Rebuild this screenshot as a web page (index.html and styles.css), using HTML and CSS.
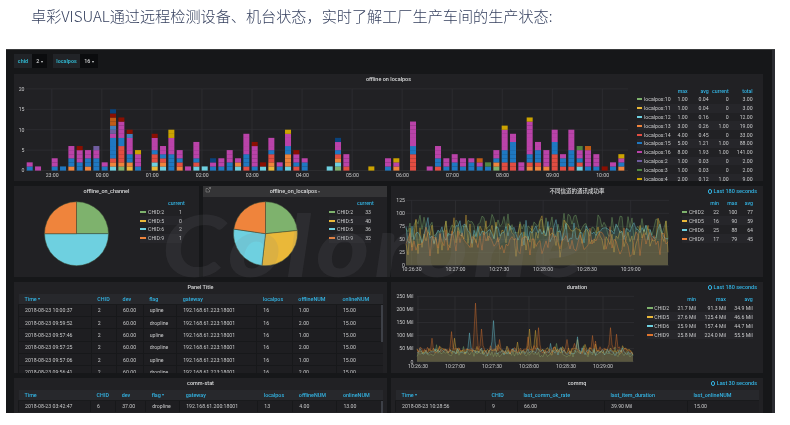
FILE: index.html
```html
<!DOCTYPE html>
<html lang="zh">
<head>
<meta charset="utf-8">
<title>卓彩VISUAL</title>
<link rel="stylesheet" href="styles.css">
</head>
<body>
<h1 class="headline">卓彩VISUAL通过远程检测设备、机台状态，实时了解工厂生产车间的生产状态:</h1>
<div class="dash">
  <div class="dash-main">
    <div class="vars">
      <span class="var-label">chid</span><span class="var-value">2 <i class="caret"></i></span>
      <span class="var-label var-second">localpos</span><span class="var-value var-wide">16 <i class="caret"></i></span>
    </div>

    <section class="panel panel-top">
      <h2 class="panel-title">offline on localpos</h2>
      <div class="top-body">
        <svg class="chart" id="bars" width="622" height="96"></svg>
        <table class="legend legend-top">
          <tr class="lh"><th></th><th></th><th>max</th><th>avg</th><th>current</th><th>total</th></tr>
          <tr><td><b class="sw c-green"></b></td><td>localpos:10</td><td>1.00</td><td>0.04</td><td>0</td><td>3.00</td></tr>
          <tr><td><b class="sw c-yellow"></b></td><td>localpos:11</td><td>1.00</td><td>0.04</td><td>0</td><td>3.00</td></tr>
          <tr><td><b class="sw c-cyan"></b></td><td>localpos:12</td><td>1.00</td><td>0.16</td><td>0</td><td>12.00</td></tr>
          <tr><td><b class="sw c-orange"></b></td><td>localpos:13</td><td>3.00</td><td>0.26</td><td>1.00</td><td>19.00</td></tr>
          <tr><td><b class="sw c-red"></b></td><td>localpos:14</td><td>4.00</td><td>0.45</td><td>0</td><td>33.00</td></tr>
          <tr><td><b class="sw c-blue"></b></td><td>localpos:15</td><td>5.00</td><td>1.21</td><td>1.00</td><td>88.00</td></tr>
          <tr><td><b class="sw c-magenta"></b></td><td>localpos:16</td><td>8.00</td><td>1.93</td><td>1.00</td><td>141.00</td></tr>
          <tr><td><b class="sw c-purple"></b></td><td>localpos:2</td><td>1.00</td><td>0.03</td><td>0</td><td>2.00</td></tr>
          <tr><td><b class="sw c-dkgreen"></b></td><td>localpos:3</td><td>1.00</td><td>0.03</td><td>0</td><td>2.00</td></tr>
          <tr><td><b class="sw c-dkyellow"></b></td><td>localpos:4</td><td>2.00</td><td>0.12</td><td>1.00</td><td>9.00</td></tr>
        </table>
      </div>
    </section>

    <div class="row row-mid">
      <section class="panel panel-pie">
        <h2 class="panel-title">offline_on_channel</h2>
        <div class="pie-body">
          <svg class="chart pie" data-values="1,0,2,1" width="70" height="70"></svg>
          <table class="legend legend-pie">
            <tr class="lh"><th></th><th></th><th>current</th></tr>
            <tr><td><b class="sw sw-big c-green"></b></td><td>CHID:2</td><td>1</td></tr>
            <tr><td><b class="sw sw-big c-yellow"></b></td><td>CHID:5</td><td>0</td></tr>
            <tr><td><b class="sw sw-big c-cyan"></b></td><td>CHID:6</td><td>2</td></tr>
            <tr><td><b class="sw sw-big c-orange"></b></td><td>CHID:9</td><td>1</td></tr>
          </table>
        </div>
      </section>
      <section class="panel panel-pie">
        <h2 class="panel-title panel-title-hover"><svg class="share" width="6" height="6" viewBox="0 0 6 6"><path d="M1 1.5h2M1 1.5v3.500h3.500v-2M3 3L5.500.5M3.800.5h1.700v1.700" fill="none" stroke="#8e8e8e" stroke-width=".6"/></svg>offline_on_localpos <i class="caret caret-dim"></i></h2>
        <div class="pie-body">
          <svg class="chart pie" data-values="33,40,36,32" width="70" height="70"></svg>
          <table class="legend legend-pie">
            <tr class="lh"><th></th><th></th><th>current</th></tr>
            <tr><td><b class="sw sw-big c-green"></b></td><td>CHID:2</td><td>33</td></tr>
            <tr><td><b class="sw sw-big c-yellow"></b></td><td>CHID:5</td><td>40</td></tr>
            <tr><td><b class="sw sw-big c-cyan"></b></td><td>CHID:6</td><td>36</td></tr>
            <tr><td><b class="sw sw-big c-orange"></b></td><td>CHID:9</td><td>32</td></tr>
          </table>
        </div>
      </section>
      <section class="panel panel-line">
        <h2 class="panel-title">不同信道的通讯成功率<span class="timeinfo"><i class="clock"></i>Last 180 seconds</span></h2>
        <div class="line-body">
          <svg class="chart" id="rate" width="283" height="80"></svg>
          <table class="legend legend-line">
            <tr class="lh"><th></th><th></th><th>min</th><th>max</th><th>avg</th></tr>
            <tr><td><b class="sw sw-big c-green"></b></td><td>CHID2</td><td>22</td><td>100</td><td>77</td></tr>
            <tr><td><b class="sw sw-big c-yellow"></b></td><td>CHID5</td><td>16</td><td>90</td><td>59</td></tr>
            <tr><td><b class="sw sw-big c-cyan"></b></td><td>CHID6</td><td>25</td><td>88</td><td>64</td></tr>
            <tr><td><b class="sw sw-big c-orange"></b></td><td>CHID9</td><td>17</td><td>79</td><td>45</td></tr>
          </table>
        </div>
      </section>
    </div>

    <div class="row row-low">
      <section class="panel panel-table">
        <h2 class="panel-title">Panel Title</h2>
        <div class="table-wrap">
          <table class="data data-a">
            <colgroup><col class="a1"><col class="a2"><col class="a3"><col class="a4"><col class="a5"><col class="a6"><col class="a7"><col class="a8"></colgroup>
            <tr><th>Time <i class="caret caret-blue"></i></th><th>CHID</th><th>dev</th><th>flag</th><th>gateway</th><th>localpos</th><th>offlineNUM</th><th>onlineNUM</th></tr>
            <tr><td>2018-08-23 10:00:37</td><td>2</td><td>60.00</td><td>upline</td><td>192.168.61.223:18001</td><td>16</td><td>1.00</td><td>15.00</td></tr>
            <tr><td>2018-08-23 09:59:52</td><td>2</td><td>60.00</td><td>dropline</td><td>192.168.61.223:18001</td><td>16</td><td>2.00</td><td>15.00</td></tr>
            <tr><td>2018-08-23 09:57:46</td><td>2</td><td>60.00</td><td>upline</td><td>192.168.61.223:18001</td><td>16</td><td>1.00</td><td>15.00</td></tr>
            <tr><td>2018-08-23 09:57:25</td><td>2</td><td>60.00</td><td>dropline</td><td>192.168.61.223:18001</td><td>16</td><td>2.00</td><td>15.00</td></tr>
            <tr><td>2018-08-23 09:57:06</td><td>2</td><td>60.00</td><td>upline</td><td>192.168.61.223:18001</td><td>16</td><td>1.00</td><td>15.00</td></tr>
            <tr><td>2018-08-23 09:56:41</td><td>2</td><td>60.00</td><td>dropline</td><td>192.168.61.223:18001</td><td>16</td><td>2.00</td><td>15.00</td></tr>
          </table>
          <i class="scroll-thumb"></i>
        </div>
      </section>
      <section class="panel panel-line">
        <h2 class="panel-title">duration<span class="timeinfo"><i class="clock"></i>Last 180 seconds</span></h2>
        <div class="line-body">
          <svg class="chart" id="duration" width="252" height="80"></svg>
          <table class="legend legend-dur">
            <tr class="lh"><th></th><th></th><th>min</th><th>max</th><th>avg</th></tr>
            <tr><td><b class="sw sw-big c-green"></b></td><td>CHID2</td><td>21.7 Mil</td><td>91.3 Mil</td><td>34.9 Mil</td></tr>
            <tr><td><b class="sw sw-big c-yellow"></b></td><td>CHID5</td><td>27.6 Mil</td><td>125.4 Mil</td><td>46.6 Mil</td></tr>
            <tr><td><b class="sw sw-big c-cyan"></b></td><td>CHID6</td><td>25.9 Mil</td><td>157.4 Mil</td><td>44.7 Mil</td></tr>
            <tr><td><b class="sw sw-big c-dkorange"></b></td><td>CHID9</td><td>25.8 Mil</td><td>224.0 Mil</td><td>55.5 Mil</td></tr>
          </table>
        </div>
      </section>
    </div>

    <div class="row row-last">
      <section class="panel panel-table">
        <h2 class="panel-title">comm-stat</h2>
        <div class="table-wrap">
          <table class="data data-b">
            <colgroup><col class="b1"><col class="b2"><col class="b3"><col class="b4"><col class="b5"><col class="b6"><col class="b7"><col class="b8"></colgroup>
            <tr><th>Time</th><th>CHID</th><th>dev</th><th>flag <i class="caret caret-blue"></i></th><th>gateway</th><th>localpos</th><th>offlineNUM</th><th>onlineNUM</th></tr>
            <tr><td>2018-08-23 03:42:47</td><td>6</td><td>37.00</td><td>dropline</td><td>192.168.61.200:18001</td><td>13</td><td>4.00</td><td>13.00</td></tr>
          </table>
          <i class="scroll-thumb"></i>
        </div>
      </section>
      <section class="panel panel-line">
        <h2 class="panel-title">commq<span class="timeinfo"><i class="clock"></i>Last 30 seconds</span></h2>
        <div class="table-wrap table-wrap-c">
          <table class="data data-c">
            <colgroup><col class="c1"><col class="c2"><col class="c3"><col class="c4"><col class="c5"></colgroup>
            <tr><th>Time <i class="caret caret-blue"></i></th><th>CHID</th><th>last_comm_ok_rate</th><th>last_item_duration</th><th>last_onlineNUM</th></tr>
            <tr><td>2018-08-23 10:28:56</td><td>9</td><td>66.00</td><td>39.90 Mil</td><td>15.00</td></tr>
          </table>
        </div>
      </section>
    </div>
  </div>
  <div class="dash-scroll"></div>
  <span class="watermark">Colorone</span>
</div>
<script src="charts.js"></script>
</body>
</html>
```
FILE: styles.css
```css
* { box-sizing: border-box; }
html, body { margin: 0; padding: 0; background: #fff; overflow: hidden; }
body { width: 790px; height: 425px; font-family: Roboto, "Noto Sans CJK SC", sans-serif; }

.headline {
  margin: 0;
  height: 49px;
  padding: 3px 0 0 31px;
  font: 300 15.15px/24px "Noto Sans CJK SC", sans-serif;
  color: #36415f;
  white-space: nowrap;
  filter: blur(.25px);
}

.dash {
  position: relative;
  display: flex;
  width: 769px;
  height: 364px;
  margin-left: 6px;
  background: #161719;
  border-top: 1px solid #3a3b3d;
  overflow: hidden;
  filter: blur(.35px);
}
.dash-main { flex: 1; padding-left: 8px; min-width: 0; }
.dash-scroll { width: 3px; background: #2b2c31; }

.vars { display: flex; height: 24px; padding-top: 4px; font-size: 5.4px; line-height: 14px; align-items: flex-start; }
.var-label { height: 14px; width: 18px; background: #212327; color: #2fb0c8; font-weight: 700; text-align: center; }
.var-second { width: 27px; margin-left: 6px; }
.var-value { height: 14px; width: 15px; background: #0b0c0e; color: #d8d9da; text-align: center; font-weight: 500; }
.var-wide { width: 18px; }
.caret { display: inline-block; width: 0; height: 0; border: 1.5px solid transparent; border-top: 2px solid #d8d9da; border-bottom: 0; vertical-align: middle; }
.caret-blue { border-top-color: #33b5e5; }
.caret-dim { border-top-color: #8e8e8e; }

.panel { background: #212124; overflow: hidden; position: relative; }
.panel-title {
  position: relative;
  margin: 0;
  height: 11px;
  font-size: 5.5px;
  line-height: 11px;
  font-weight: 500;
  color: #d8d9da;
  text-align: center;
  white-space: nowrap;
}
.panel-title-hover { background: #343436; }
.share { position: absolute; left: 2px; top: 1px; }
.timeinfo { position: absolute; right: 6px; top: 0; color: #33b5e5; font-weight: 500; }
.clock { display: inline-block; width: 4.5px; height: 4.5px; margin-right: 1.5px; border: .7px solid #33b5e5; border-radius: 50%; vertical-align: -.5px; }

.panel-top { width: 749px; height: 107px; }
.top-body { display: flex; }
.chart { display: block; flex: none; }
.chart text { font-family: Roboto, sans-serif; font-size: 5.2px; fill: #c8c9ca; }

.row { display: flex; gap: 4px; margin-top: 5px; }
.row-mid { height: 91px; }
.row-low { height: 91px; }
.row-last { height: 40px; }
.panel-pie { width: 185px; }
.panel-pie + .panel-pie { width: 184px; }
.panel-line { width: 372px; }
.panel-table { width: 373px; }

.pie-body { display: flex; padding: 0 0 0 27px; }
.line-body { display: flex; }

.legend { border-collapse: collapse; font-size: 5.2px; color: #c8c9ca; flex: none; align-self: flex-start; }
.legend th { color: #33b5e5; font-weight: 500; text-align: right; padding: 0; }
.legend td { padding: 0; text-align: right; white-space: nowrap; }
.legend td:nth-child(2) { text-align: left; }
.legend tr { height: 8.8px; }
.legend tr:nth-child(odd):not(.lh) td { background: #26262a; }
.sw { display: block; width: 5px; height: 2px; }
.sw-big { width: 5.5px; height: 2px; }
.c-green { background: #7eb26d; }
.c-yellow { background: #eab839; }
.c-cyan { background: #6ed0e0; }
.c-orange { background: #ef843c; }
.c-dkorange { background: #e0752d; }
.c-red { background: #e24d42; }
.c-blue { background: #1f78c1; }
.c-magenta { background: #ba43a9; }
.c-purple { background: #705da0; }
.c-dkgreen { background: #508642; }
.c-dkyellow { background: #cca300; }

.legend-top { margin: 2px 0 0 .7px; width: 116px; table-layout: fixed; }
.legend-top tr:first-child { height: 8px; }
.legend-top th:nth-child(1) { width: 7.3px; }
.legend-top th:nth-child(2) { width: 27px; }
.legend-top th:nth-child(3) { width: 16.7px; }
.legend-top th:nth-child(4) { width: 21px; }
.legend-top th:nth-child(5) { width: 20px; }
.legend-top th:nth-child(6) { width: 24px; }

.legend-pie { margin: 1.3px 0 0 29px; width: 42px; table-layout: fixed; }
.legend-pie tr { height: 8.9px; }
.legend-pie th:nth-child(1) { width: 8px; }
.legend-pie th:nth-child(2) { width: 20px; }
.legend-pie th:nth-child(3) { width: 14px; }

.legend-line { margin: 1.5px 0 0 7.7px; width: 71.3px; table-layout: fixed; }
.legend-line tr { height: 8.9px; }
.legend-line th:nth-child(1) { width: 7.3px; }
.legend-line th:nth-child(2) { width: 18px; }
.legend-line th:nth-child(3) { width: 12px; }
.legend-line th:nth-child(4) { width: 18.300px; }
.legend-line th:nth-child(5) { width: 15.700px; }

.legend-dur { margin: 1.5px 0 0 4.3px; width: 105.4px; table-layout: fixed; }
.legend-dur tr { height: 8.9px; }
.legend-dur th:nth-child(1) { width: 7px; }
.legend-dur th:nth-child(2) { width: 17px; }
.legend-dur th:nth-child(3) { width: 24.700px; }
.legend-dur th:nth-child(4) { width: 30px; }
.legend-dur th:nth-child(5) { width: 26.700px; }

.table-wrap { position: relative; margin: 0 4px; height: 80px; padding-top: 1px; overflow: hidden; }
.data { border-collapse: collapse; table-layout: fixed; width: 100%; font-size: 5.2px; color: #c8c9ca; }
.data th { height: 10px; background: #27282c; color: #33b5e5; font-weight: 500; text-align: left; padding: 0 0 0 6px; font-size: 5.4px; border-bottom: 1px solid #191a1c; }
.data td { height: 12.4px; padding: 0 0 0 6px; border-top: .5px solid #17181a; border-left: .5px solid #17181a; white-space: nowrap; background: #1e1e21; }
.scroll-thumb { position: absolute; right: 0; top: 12px; width: 2px; height: 37px; background: #3d4047; }

col.a1 { width: 72.7px; } col.a2 { width: 25.3px; } col.a3 { width: 26.5px; } col.a4 { width: 33.5px; }
col.a5 { width: 80px; } col.a6 { width: 35.5px; } col.a7 { width: 44px; } col.a8 { width: 46.5px; }
col.b1 { width: 72px; } col.b2 { width: 25px; } col.b3 { width: 30px; } col.b4 { width: 34px; }
col.b5 { width: 78px; } col.b6 { width: 35px; } col.b7 { width: 44px; } col.b8 { width: 46px; }
col.c1 { width: 90px; } col.c2 { width: 32px; } col.c3 { width: 87px; } col.c4 { width: 83px; } col.c5 { width: 73px; }

.watermark {
  position: absolute;
  left: 156px;
  top: 144px;
  font: italic 900 85px/100px Lato, sans-serif;
  letter-spacing: 4px;
  color: rgba(125, 125, 130, .13);
  white-space: nowrap;
  pointer-events: none;
  transform: scaleX(1.2);
  transform-origin: left top;
}
```
FILE: charts.js
```js
var NS = 'http://www.w3.org/2000/svg';
var COL = { m: '#ba43a9', b: '#1f78c1', r: '#e24d42', o: '#ef843c', c: '#6ed0e0', y: '#eab839', g: '#7eb26d',
  D: '#890f02', Y: '#cca300', B: '#0a437c', p: '#705da0', l: '#447ebc', O: '#c15c17', G: '#508642' };

function el(parent, tag, attrs, text) {
  var e = document.createElementNS(NS, tag);
  for (var k in attrs) e.setAttribute(k, attrs[k]);
  if (text !== undefined) e.textContent = text;
  parent.appendChild(e);
  return e;
}

/* Each bar: colour letters, bottom to top, one letter per unit */
var BARS = ['bm','m','','bmm','b','obbmmm','bbmmmD','obbmm','bbbmmp','bm',
  'corbbbbbmplOODB','gorrrrbbmmmmD','yobbmmmmlD','bmmmY','','ycrrbmmmD','corbmm','bbbbmmmmYY','orbmm','m',
  'crbmmmm','c','bmB','bmm','bbmmm','com','rbbbmmmmm','bmmmmmD','cD','yorrbmmm',
  'bm','cooobbmmmY','rbmmD','bbm','','','c','gcorbmmB','rmmm','',
  '','Y','','bmm','omY','','rrrrbbmmmmmm','','m','rbbmmm',
  'bmm','bbmm','bmm','bbm','bmO','bG','gobmm','rrbbbmmmmmY','rrbbbbbmm','mm',
  'orbbmmmmmmmmY','orbbbmm','ommmm','rrrrbbbmmm','rbbm','rbbbbmmmmm','crbmmG','bmmmmO','bmmm','D',
  'bm','obmY'];

function drawBars() {
  var s = document.getElementById('bars');
  var base = 85.5, unit = 4.08, x0 = 12.7, pitch = 8.333;
  [0, 5, 10, 15, 20].forEach(function (v) {
    var y = base - v * unit;
    el(s, 'line', { x1: 12, x2: 614, y1: y, y2: y, stroke: '#313135', 'stroke-width': .7 });
    el(s, 'text', { x: 10.5, y: y + 1.8, 'text-anchor': 'end' }, v);
  });
  ['23:00','00:00','01:00','02:00','03:00','04:00','05:00','06:00','07:00','08:00','09:00','10:00'].forEach(function (t, i) {
    var x = 37.8 + i * 50.05;
    el(s, 'line', { x1: x, x2: x, y1: base - 20 * unit, y2: base, stroke: '#313135', 'stroke-width': .7 });
    el(s, 'text', { x: x + .3, y: base + 6, 'text-anchor': 'middle' }, t);
  });
  BARS.forEach(function (bar, i) {
    for (var j = 0; j < bar.length; j++) {
      el(s, 'rect', { x: x0 + i * pitch, y: base - (j + 1) * unit, width: 6, height: unit + .1, fill: COL[bar[j]] });
    }
  });
}

function drawPies() {
  var colors = ['#7eb26d', '#eab839', '#6ed0e0', '#ef843c'];
  document.querySelectorAll('.pie').forEach(function (s) {
    var vals = s.dataset.values.split(',').map(Number);
    var total = vals.reduce(function (a, b) { return a + b; }, 0);
    var cx = 35.5, cy = 36.7, r = 32, a = 0;
    vals.forEach(function (v, i) {
      if (!v) return;
      var b = a + v / total * 2 * Math.PI;
      var x1 = cx + r * Math.sin(a), y1 = cy - r * Math.cos(a);
      var x2 = cx + r * Math.sin(b), y2 = cy - r * Math.cos(b);
      el(s, 'path', {
        d: 'M' + cx + ' ' + cy + 'L' + x1 + ' ' + y1 + 'A' + r + ' ' + r + ' 0 ' + (b - a > Math.PI ? 1 : 0) + ' 1 ' + x2 + ' ' + y2 + 'Z',
        fill: colors[i], stroke: '#3a4a35', 'stroke-width': .5
      });
      a = b;
    });
  });
}

function rng(seed) {
  return function () {
    seed = (seed * 16807) % 2147483647;
    return (seed - 1) / 2147483646;
  };
}

function series(s, pts, base, color, fillOpacity) {
  var line = pts.map(function (p) { return p[0].toFixed(1) + ',' + p[1].toFixed(1); }).join(' ');
  el(s, 'polygon', { points: pts[0][0] + ',' + base + ' ' + line + ' ' + pts[pts.length - 1][0] + ',' + base, fill: color, 'fill-opacity': fillOpacity });
  el(s, 'polyline', { points: line, fill: 'none', stroke: color, 'stroke-width': .55, 'stroke-opacity': .72 });
}

function frame(s, left, right, base, top, yLabels, xFirst, xStep, xLabels, gap) {
  yLabels.forEach(function (l, i) {
    var y = base - (base - top) * i / (yLabels.length - 1);
    el(s, 'line', { x1: left, x2: right, y1: y, y2: y, stroke: '#313135', 'stroke-width': .7 });
    el(s, 'text', { x: left - gap, y: y + 1.8, 'text-anchor': 'end' }, l);
  });
  xLabels.forEach(function (l, i) {
    var x = xFirst + i * xStep;
    el(s, 'line', { x1: x, x2: x, y1: top, y2: base, stroke: '#313135', 'stroke-width': .7 });
    el(s, 'text', { x: x, y: base + 6, 'text-anchor': 'middle' }, l);
  });
}

var TIMES = ['10:26:30', '10:27:00', '10:27:30', '10:28:00', '10:28:30', '10:29:00'];

function drawRate() {
  var s = document.getElementById('rate');
  var left = 15, right = 278, base = 68.3, top = 3.3, k = (base - top) / 125;
  frame(s, left, right, base, top, [0, 25, 50, 75, 100, 125], 20.7, 43.8, TIMES, 1);
  var defs = [['#7eb26d', 77, 15, 11], ['#eab839', 59, 23, 22], ['#6ed0e0', 64, 15, 47], ['#ef843c', 45, 17, 83]];
  defs.forEach(function (d) {
    var r = rng(d[3] * 7919), pts = [];
    for (var x = left; x <= right; x += 2) {
      var v = d[1] + (r() + r() - 1) * d[2] * 2;
      pts.push([x, base - k * Math.max(15, Math.min(100, v))]);
    }
    series(s, pts, base, d[0], .12);
  });
}

function drawDuration() {
  var s = document.getElementById('duration');
  var left = 26, right = 243, base = 68.7, top = 3.3;
  var k = (base - top) / 250;
  frame(s, left, right, base, top, ['0', '50 Mil', '100 Mil', '150 Mil', '200 Mil', '250 Mil'], 27, 37, TIMES, 3.5);
  var spikes = {
    '#e0752d': [[59, 224], [64, 125], [34, 115], [82, 85], [111, 95], [150, 85], [193, 130], [200, 105], [15, 90], [122, 130], [175, 100]],
    '#eab839': [[113, 125], [119, 120], [37, 90], [160, 85], [100, 75]],
    '#6ed0e0': [[76, 157], [53, 110], [160, 95], [225, 90], [133, 70]],
    '#7eb26d': [[20, 65], [90, 60], [140, 70]]
  };
  [['#7eb26d', 30, 21], ['#eab839', 40, 43], ['#6ed0e0', 38, 59], ['#e0752d', 45, 97]].forEach(function (d) {
    var r = rng(d[2] * 104729), pts = [];
    for (var x = left; x <= right; x += 1.5) {
      var v = d[1] + (r() + r() - 1) * 18;
      if (r() > .93) v += 25 * r();
      spikes[d[0]].forEach(function (p) {
        var dx = Math.abs(x - left - p[0]);
        if (dx <= .75) v = p[1];
        else if (dx <= 2.25) v = Math.max(v, p[1] * .5);
      });
      pts.push([x, base - k * Math.max(18, v)]);
    }
    series(s, pts, base, d[0], .12);
  });
}

drawBars();
drawPies();
drawRate();
drawDuration();
```
